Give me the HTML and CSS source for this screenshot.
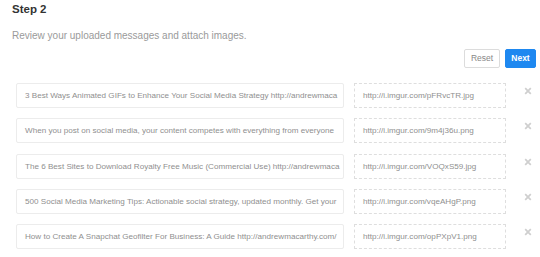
FILE: index.html
```html
<!DOCTYPE html>
<html>
<head>
<meta charset="utf-8">
<link rel="stylesheet" href="styles.css">
</head>
<body>
<div class="page">
  <h2 class="title">Step 2</h2>
  <p class="desc">Review your uploaded messages and attach images.</p>
  <div class="actions">
    <button class="btn btn-reset">Reset</button>
    <button class="btn btn-next">Next</button>
  </div>
  <div class="rows">
    <div class="row">
      <div class="msg">3 Best Ways Animated GIFs to Enhance Your Social Media Strategy http://andrewmaca</div>
      <div class="url">http://i.imgur.com/pFRvcTR.jpg</div>
      <div class="remove"><svg viewBox="0 0 10 10" width="8" height="8"><path d="M1.5 1.5 L8.5 8.5 M8.5 1.5 L1.5 8.5" stroke="#cfcfcf" stroke-width="2.2" stroke-linecap="butt"/></svg></div>
    </div>
    <div class="row">
      <div class="msg">When you post on social media, your content competes with everything from everyone</div>
      <div class="url">http://i.imgur.com/9m4j36u.png</div>
      <div class="remove"><svg viewBox="0 0 10 10" width="8" height="8"><path d="M1.5 1.5 L8.5 8.5 M8.5 1.5 L1.5 8.5" stroke="#cfcfcf" stroke-width="2.2" stroke-linecap="butt"/></svg></div>
    </div>
    <div class="row">
      <div class="msg">The 6 Best Sites to Download Royalty Free Music (Commercial Use) http://andrewmaca</div>
      <div class="url">http://i.imgur.com/VOQxS59.jpg</div>
      <div class="remove"><svg viewBox="0 0 10 10" width="8" height="8"><path d="M1.5 1.5 L8.5 8.5 M8.5 1.5 L1.5 8.5" stroke="#cfcfcf" stroke-width="2.2" stroke-linecap="butt"/></svg></div>
    </div>
    <div class="row">
      <div class="msg">500 Social Media Marketing Tips: Actionable social strategy, updated monthly. Get your</div>
      <div class="url">http://i.imgur.com/vqeAHgP.png</div>
      <div class="remove"><svg viewBox="0 0 10 10" width="8" height="8"><path d="M1.5 1.5 L8.5 8.5 M8.5 1.5 L1.5 8.5" stroke="#cfcfcf" stroke-width="2.2" stroke-linecap="butt"/></svg></div>
    </div>
    <div class="row">
      <div class="msg">How to Create A Snapchat Geofilter For Business: A Guide http://andrewmacarthy.com/</div>
      <div class="url">http://i.imgur.com/opPXpV1.png</div>
      <div class="remove"><svg viewBox="0 0 10 10" width="8" height="8"><path d="M1.5 1.5 L8.5 8.5 M8.5 1.5 L1.5 8.5" stroke="#cfcfcf" stroke-width="2.2" stroke-linecap="butt"/></svg></div>
    </div>
  </div>
</div>
</body>
</html>
```
FILE: styles.css
```css
html, body {
  margin: 0;
  padding: 0;
  background: #ffffff;
}
body {
  font-family: "Liberation Sans", Arial, sans-serif;
  width: 540px;
  height: 257px;
  overflow: hidden;
}
.page {
  padding: 4px 4px 0 12px;
}
.title {
  margin: 0;
  font-size: 11.5px;
  font-weight: bold;
  color: #333;
  line-height: 11px;
  height: 11px;
}
.desc {
  margin: 15px 0 0 0;
  font-size: 10px;
  line-height: 12px;
  color: #9a9a9a;
}
.actions {
  display: flex;
  justify-content: flex-end;
  gap: 5px;
  margin-top: 7px;
}
.btn {
  height: 19px;
  padding: 0;
  border-radius: 2px;
  font-family: "Liberation Sans", Arial, sans-serif;
  font-size: 8.5px;
  line-height: 17px;
  cursor: pointer;
}
.btn-reset {
  width: 36px;
  background: #fff;
  border: 1px solid #dcdcdc;
  color: #888;
}
.btn-next {
  width: 31px;
  background: #1e88f0;
  border: 1px solid #1e88f0;
  color: #fff;
  font-weight: bold;
}
.rows {
  display: flex;
  flex-direction: column;
  gap: 10.25px;
  margin-top: 15px;
  padding-left: 4px;
}
.row {
  display: flex;
  align-items: flex-start;
  height: 25px;
}
.msg {
  box-sizing: border-box;
  width: 328px;
  height: 25px;
  border: 1px solid #ececec;
  border-radius: 2px;
  padding: 0 2px 0 8px;
  font-size: 8.1px;
  line-height: 23px;
  color: #8f8f8f;
  white-space: nowrap;
  overflow: hidden;
}
.url {
  box-sizing: border-box;
  width: 152px;
  height: 25px;
  margin-left: 10px;
  border: 1px dashed #dedede;
  padding: 0 8px;
  font-size: 8.1px;
  line-height: 23px;
  color: #8f8f8f;
  white-space: nowrap;
  overflow: hidden;
}
.remove {
  margin-left: 18px;
  margin-top: 4px;
  width: 8px;
  height: 8px;
  display: flex;
}
```
